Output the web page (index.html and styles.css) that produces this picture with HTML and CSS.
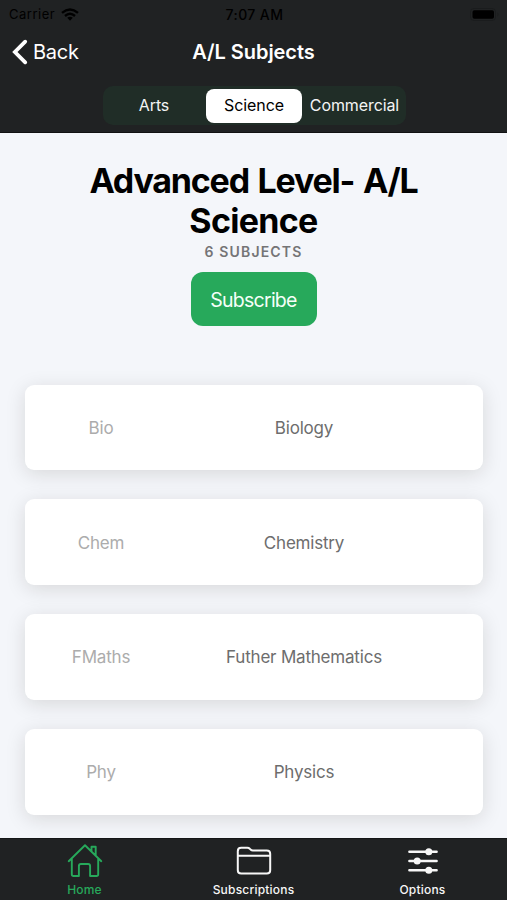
FILE: index.html
```html
<!DOCTYPE html>
<html lang="en">
<head>
<meta charset="utf-8">
<title>A/L Subjects</title>
<link rel="stylesheet" href="styles.css">
</head>
<body>
<header class="header">
  <div class="status">
    <div class="carrier"><span class="carrier-name">Carrier</span>
      <svg width="18" height="13" viewBox="0 0 18 13" fill="none" stroke="#000" stroke-width="2.4"><path d="M1 4.8Q9-2 17 4.8M4 8Q9 3.6 14 8"/><path d="M6.2 9.8Q9 7.8 11.8 9.8L9 12.7Z" fill="#000" stroke="none"/></svg>
    </div>
    <span class="time">7:07 AM</span>
    <svg class="battery" width="30" height="13" viewBox="0 0 30 13"><rect x=".5" y=".5" width="25" height="12" rx="3.5" fill="none" stroke="#1a1c1d"/><rect x="2.5" y="2.3" width="21.5" height="8.4" rx="1.8"/><path d="M27.5 4.5q2 2 0 4" fill="#1a1c1d"/></svg>
  </div>
  <nav class="nav">
    <a class="back"><svg width="16" height="26" viewBox="0 0 16 26" fill="none" stroke="#fff" stroke-width="3.8" stroke-linecap="round" stroke-linejoin="miter"><path d="M13.2 2.7 2.9 13l10.3 10.3"/></svg><span>Back</span></a>
    <h1 class="nav-title">A/L Subjects</h1>
  </nav>
  <div class="segments">
    <span class="segment segment-first">Arts</span>
    <span class="segment segment-active">Science</span>
    <span class="segment segment-last">Commercial</span>
  </div>
</header>
<main class="main">
  <h2 class="title"><span class="title-lead">Advanced Level- A/L</span><br>Science</h2>
  <p class="count">6 SUBJECTS</p>
  <button class="subscribe">Subscribe</button>
  <section class="cards">
    <article class="card"><span class="code">Bio</span><span class="subject">Biology</span></article>
    <article class="card"><span class="code">Chem</span><span class="subject">Chemistry</span></article>
    <article class="card"><span class="code">FMaths</span><span class="subject">Futher Mathematics</span></article>
    <article class="card"><span class="code">Phy</span><span class="subject">Physics</span></article>
  </section>
</main>
<footer class="tabs">
  <a class="tab tab-active">
    <svg width="36" height="36" viewBox="0 0 36 36" fill="none" stroke="currentColor" stroke-width="1.9" stroke-linecap="round" stroke-linejoin="round"><path d="M1.7 18.2 18 2.3l16.3 15.9M4.8 15.5v15.7q0 1.8 1.8 1.8h5.3V23q0-2 2-2h7.2q2 0 2 2v10h6.3q1.8 0 1.8-1.8V15.5M24.5 8V3.8h4.2V12.5"/></svg>
    <span>Home</span>
  </a>
  <a class="tab">
    <svg width="36" height="36" viewBox="0 0 36 36" fill="none" stroke="currentColor" stroke-width="2" stroke-linejoin="round"><path d="M1.8 12.5V8.2q0-3.4 3.4-3.4h6.1q1.5 0 2.5 1l1 .9q.8.7 2 .7h14q3.4 0 3.4 3.4v16.4q0 3.3-3.4 3.3H5.2q-3.4 0-3.4-3.3zM2 12.8h32"/></svg>
    <span>Subscriptions</span>
  </a>
  <a class="tab">
    <svg width="36" height="36" viewBox="0 0 36 36" fill="none" stroke="currentColor" stroke-width="2.5" stroke-linecap="round"><path d="M4.4 8.8h27.2M4.4 18h27.2M4.4 27.2h27.2"/><g fill="currentColor" stroke="none"><circle cx="23.8" cy="8.8" r="3.5"/><circle cx="12.2" cy="18" r="3.5"/><circle cx="23.8" cy="27.2" r="3.5"/></g></svg>
    <span>Options</span>
  </a>
</footer>
</body>
</html>
```
FILE: styles.css
```css
* { box-sizing: border-box; }
html { background: #202223; }
body {
  margin: 0;
  height: 900px;
  display: flex;
  flex-direction: column;
  overflow: hidden;
  font-family: Inter, "Liberation Sans", sans-serif;
  background: #f4f6fa;
}
svg { display: block; flex: none; }
.header { height: 133px; flex: none; background: #202223; border-bottom: 1px solid #111213; }
.status {
  height: 28px;
  padding: 0 7px 0 9px;
  display: grid;
  grid-template-columns: 1fr auto 1fr;
  align-items: center;
  font-size: 13px;
  color: #000;
}
.carrier { display: flex; align-items: center; gap: 6px; }
.carrier-name { letter-spacing: .5px; }
.time { font-size: 14px; font-weight: 500; letter-spacing: .4px; }
.battery { justify-self: end; }
.nav {
  height: 48px;
  padding: 0 12px;
  display: grid;
  grid-template-columns: 1fr auto 1fr;
  align-items: center;
  color: #fff;
}
.back { display: flex; align-items: center; gap: 5px; font-size: 20px; letter-spacing: -.25px; }
.nav-title { margin: 0; font-size: 20px; font-weight: 600; letter-spacing: -.05px; }
.segments {
  width: 303px;
  height: 39px;
  margin: 10px 101px 0 103px;
  padding: 3px;
  display: grid;
  grid-template-columns: 100px 96px 1fr;
  background: #202d27;
  border-radius: 10px;
}
.segment { height: 34px; padding-bottom: 2px; display: flex; align-items: center; justify-content: center; color: #f4f5f4; font-size: 16px; letter-spacing: -.1px; }
.segment-first { padding-right: 4px; }
.segment-active { border-radius: 8px; background: #fff; color: #000; }
.segment-last { padding-left: 4px; }
.main { flex: 1; min-height: 0; padding-top: 28px; display: flex; flex-direction: column; align-items: center; overflow: hidden; }
.title { margin: 0; font-size: 34px; line-height: 40px; font-weight: 700; letter-spacing: -.7px; text-align: center; color: #000; }
.title-lead { letter-spacing: -1.2px; word-spacing: 1.8px; }
.count { margin: 2px 0 0; font-size: 14px; line-height: 18px; font-weight: 600; letter-spacing: 1.15px; color: #747476; }
.subscribe {
  width: 126px;
  height: 54px;
  flex: none;
  margin-top: 11px;
  padding: 2px 0 0;
  border: 0;
  border-radius: 12px;
  background: #27a95b;
  color: #f5fff8;
  font: 400 19.5px Inter, "Liberation Sans", sans-serif;
  letter-spacing: -.75px;
}
.cards { width: 458px; margin-top: 58.5px; display: flex; flex-direction: column; gap: 29px; flex: none; }
.card {
  height: 85.8px;
  padding-top: 1px;
  display: grid;
  grid-template-columns: 153px 253px;
  align-items: center;
  text-align: center;
  background: #fff;
  border-radius: 9px;
  box-shadow: 0 4px 20px rgba(28, 24, 8, .13);
  font-size: 17px;
  letter-spacing: -.2px;
}
.code { color: #acacac; }
.subject { color: #6d6d6d; }
.tabs { height: 62px; flex: none; display: grid; grid-template-columns: repeat(3, 1fr); align-items: start; background: #202223; border-top: 1px solid #151718; }
.tab { padding-top: 4px; display: flex; flex-direction: column; align-items: center; gap: 3px; color: #f7f7f7; font-size: 12px; line-height: 15px; font-weight: 500; letter-spacing: .2px; }
.tab-active { color: #27a95b; }
```
